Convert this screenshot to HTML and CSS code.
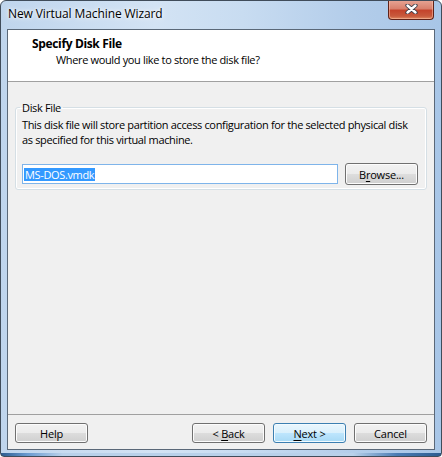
FILE: index.html
```html
<!DOCTYPE html>
<html>
<head>
<meta charset="utf-8">
<link rel="stylesheet" href="styles.css">
</head>
<body>
<div class="window">
  <div class="titlebar">
    <span class="title">New Virtual Machine Wizard</span>
    <div class="close">
      <svg width="13" height="10" viewBox="0 0 13 10">
        <path d="M2.5 1.5 L10.5 8.5 M10.5 1.5 L2.5 8.5" stroke="#3a3a46" stroke-width="4.2" stroke-linecap="round" fill="none"/>
        <path d="M2.5 1.5 L10.5 8.5 M10.5 1.5 L2.5 8.5" stroke="#ffffff" stroke-width="2.4" stroke-linecap="round" fill="none"/>
      </svg>
    </div>
  </div>
  <div class="client">
    <div class="header">
      <div class="h-title">Specify Disk File</div>
      <div class="h-sub">Where would you like to store the disk file?</div>
    </div>
    <div class="body">
      <fieldset class="group">
        <legend class="legend">Disk File</legend>
        <p class="desc">This disk file will store partition access configuration for the selected physical disk<br>as specified for this virtual machine.</p>
        <div class="file-row">
          <div class="input"><span class="sel">MS-DOS.vmdk</span></div>
          <button class="btn browse">B<u>r</u>owse...</button>
        </div>
      </fieldset>
    </div>
    <div class="footer">
      <button class="btn">Help</button>
      <div class="spacer"></div>
      <button class="btn">&lt; <u>B</u>ack</button>
      <button class="btn default"><u>N</u>ext &gt;</button>
      <button class="btn">Cancel</button>
    </div>
  </div>
</div>
</body>
</html>
```

FILE: styles.css
```css
html, body {
  margin: 0;
  padding: 0;
  background: #ffffff;
}

.window {
  width: 442px;
  height: 457px;
  box-sizing: border-box;
  border: 1px solid #404c5a;
  border-radius: 6px 6px 4px 4px;
  background:
    linear-gradient(to right, #2c5c90 0%, #6a9ad0 6%, #b9d1ea 14%, #b9d1ea 80%, #4a7cb4 90%, #2c5c90 100%) bottom / 100% 3px no-repeat,
    linear-gradient(to right, #bfd5ed 0%, #d3e3f4 35%, #c8dcf1 55%, #b3cdea 80%, #a8c6e7 100%);
  display: flex;
  flex-direction: column;
  font-family: "Open Sans", "Noto Sans", sans-serif;
  font-size: 11px;
  letter-spacing: -0.35px;
  color: #000;
  overflow: hidden;
}

.titlebar {
  height: 28px;
  flex: none;
  display: flex;
  align-items: flex-start;
}

.title {
  padding: 5px 0 0 7px;
  line-height: 15px;
  font-size: 12px;
  letter-spacing: -0.1px;
  color: #000;
  text-shadow: 0 0 6px #ffffff, 0 0 3px #ffffff;
}

.close {
  margin-left: auto;
  margin-right: 7px;
  margin-top: -1px;
  width: 46px;
  height: 20px;
  box-sizing: border-box;
  border: 1px solid #5f2218;
  border-top: none;
  border-radius: 0 0 4px 4px;
  background: linear-gradient(#e8a696 0%, #d9806d 45%, #c4442c 55%, #c85a3d 85%, #e08a60 100%);
  box-shadow: inset 0 0 0 1px rgba(255, 200, 180, 0.5);
  display: flex;
  align-items: center;
  justify-content: center;
}

.close svg {
  display: block;
  margin-top: -1px;
}

.client {
  flex: 1;
  margin: 0 6px 6px 6px;
  border: 1px solid #5a6878;
  background: #f0f0f0;
  display: flex;
  flex-direction: column;
}

.header {
  height: 45px;
  flex: none;
  background: #ffffff;
  border-bottom: 1px solid #a0a0a0;
  padding-top: 6px;
  box-sizing: content-box;
}

.h-title {
  padding-left: 24px;
  font-weight: bold;
  font-size: 12px;
  letter-spacing: -0.35px;
  line-height: 15px;
}

.h-sub {
  padding-left: 48px;
  line-height: 16px;
  padding-top: 1px;
}

.body {
  flex: 1;
  padding-top: 18px;
}

.group {
  margin: 0 7px;
  padding: 2px 8px 4px 6px;
  border: 1px solid #d5dfe5;
  border-radius: 3px;
  box-shadow: inset 0 0 0 1px #ffffff;
}

.legend {
  padding: 0 2px;
  margin-left: -2px;
  line-height: 15px;
}

.desc {
  margin: 0;
  line-height: 15px;
  white-space: nowrap;
}

.file-row {
  display: flex;
  align-items: center;
  gap: 7px;
  margin-top: 16px;
}

.input {
  width: 316px;
  height: 20px;
  box-sizing: border-box;
  border: 1px solid #7eb4ea;
  background: #ffffff;
  padding: 1px 0 0 1px;
  line-height: 15px;
}

.sel {
  background: #3399ff;
  color: #ffffff;
  display: inline-block;
  line-height: 13px;
  padding: 0 1px 0 1px;
  margin-top: 2px;
  vertical-align: top;
}

.btn {
  width: 73px;
  height: 20px;
  box-sizing: border-box;
  border: 1px solid #707070;
  border-radius: 3px;
  background: linear-gradient(#f2f2f2 0%, #ebebeb 50%, #dddddd 50%, #cfcfcf 100%);
  box-shadow: inset 0 0 0 1px #fcfcfc;
  font-family: inherit;
  font-size: 11px;
  letter-spacing: -0.2px;
  color: #000;
  padding: 0;
  line-height: 15px;
  text-align: center;
}

.btn u {
  text-decoration-thickness: 1px;
  text-underline-offset: 2px;
}

.browse {
  height: 22px;
}

.default {
  border-color: #3c7fb1;
  background: linear-gradient(#eaf6fd 0%, #d9f0fc 50%, #bee6fd 50%, #a7d9f5 100%);
  box-shadow: inset 0 0 0 1px #f2fbff;
}

.footer {
  flex: none;
  border-top: 1px solid #a0a0a0;
  padding: 8px 7px 6px 7px;
  display: flex;
  gap: 8px;
}

.spacer {
  flex: 1;
}
```
